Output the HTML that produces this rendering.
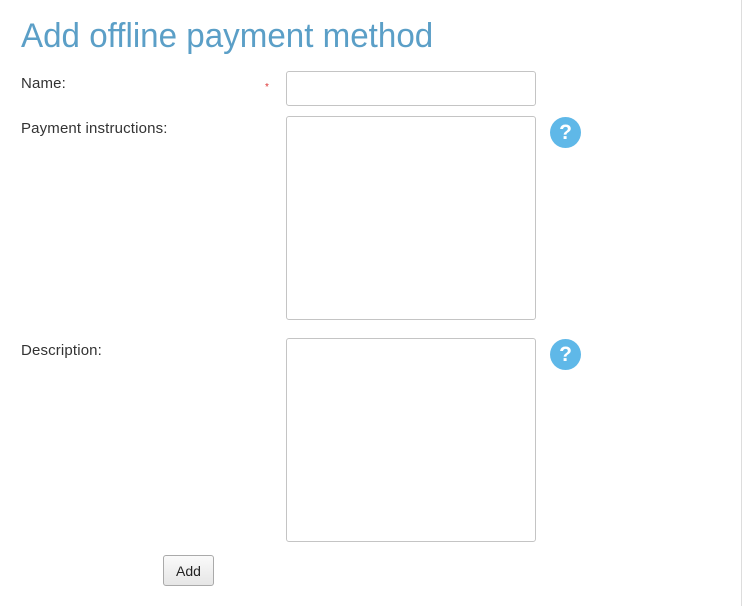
<!DOCTYPE html>
<html><head><style>
body{margin:0;width:744px;height:606px;background:#fff;position:relative;font-family:"Liberation Sans",Arial,sans-serif;overflow:hidden}
.a{position:absolute}
h1{position:absolute;left:21px;top:17px;margin:0;font-weight:normal;font-size:34px;color:#5b9fc7;white-space:nowrap;transform:scaleX(0.975);transform-origin:left}
.l{font-size:15px;color:#333;letter-spacing:0.15px}
.box{border:1px solid #c4c4c4;border-radius:3px;background:#fff;box-sizing:border-box}
.q{width:31px;height:31px;border-radius:50%;background:#5fb8e8;color:#fff;font-weight:bold;font-size:21px;text-align:center;line-height:31px}
</style></head><body>
<div class="a" style="left:741px;top:0;width:1px;height:606px;background:#ddd"></div>
<h1>Add offline payment method</h1>
<div class="a l" style="left:21px;top:75px">Name:</div>
<div class="a" style="left:265px;top:82px;color:#d33;font-size:10px">*</div>
<div class="a box" style="left:286px;top:71px;width:250px;height:35px"></div>
<div class="a l" style="left:21px;top:120px">Payment instructions:</div>
<div class="a box" style="left:286px;top:116px;width:250px;height:204px"></div>
<div class="a q" style="left:550px;top:117px">?</div>
<div class="a l" style="left:21px;top:342px">Description:</div>
<div class="a box" style="left:286px;top:338px;width:250px;height:204px"></div>
<div class="a q" style="left:550px;top:339px">?</div>
<div class="a" style="left:163px;top:555px;width:51px;height:31px;box-sizing:border-box;border:1px solid #aaa;border-radius:3px;background:linear-gradient(#fafafa,#e6e6e6);font-size:14px;text-align:center;line-height:31px;color:#222">Add</div>
</body></html>
